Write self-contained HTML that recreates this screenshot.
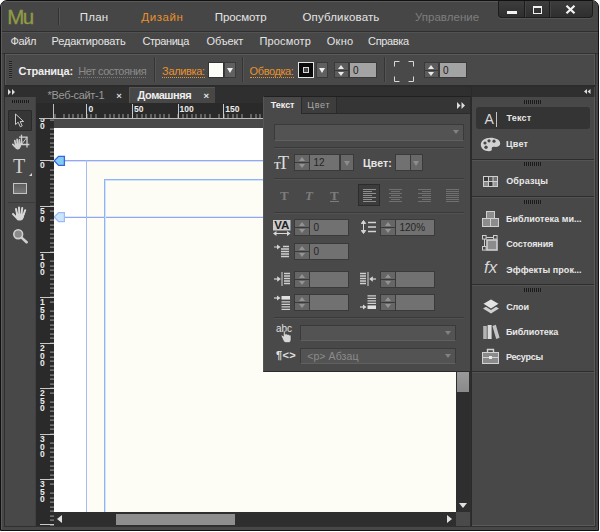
<!DOCTYPE html>
<html lang="ru">
<head>
<meta charset="utf-8">
<title>Adobe Muse</title>
<style>
html,body{margin:0;padding:0;}
body{width:600px;height:532px;background:#fff;overflow:hidden;position:relative;font-family:"Liberation Sans",sans-serif;font-size:11px;color:#e4e4e4;}
.a{position:absolute;}
.t{position:absolute;white-space:nowrap;line-height:1;}
#win{position:absolute;left:0;top:0;width:597px;height:529px;border:1px solid #111;border-radius:7px 7px 0 0;background:#474747;overflow:hidden;}
/* everything inside #win is offset by the 1px border: use #in wrapper shifted -1,-1 so coords = page coords */
#in{position:absolute;left:-1px;top:-1px;width:600px;height:532px;}
.b{font-weight:bold;}
.grip{background:repeating-linear-gradient(to right,#1a1a1a 0,#1a1a1a 1px,#4a4a4a 1px,#4a4a4a 2px);}
.dl{font-size:9px;color:#e8e8e8;}
.hs{width:122px;height:1px;background:#2c2c2c;border-bottom:1px solid #545454;}
.rl{font-size:8.5px;font-weight:bold;color:#ececec;}
.or{color:#e8912d;}
.sep{width:1px;background:#353535;border-right:1px solid #545454;}
.dd{background:#606060;border:1px solid #3a3a3a;box-sizing:border-box;}
.dd i{position:absolute;left:2px;top:5px;width:0;height:0;border-left:3.5px solid transparent;border-right:3.5px solid transparent;border-top:5px solid #f0f0f0;}
.spin{width:14px;height:16px;background:#5c5c5c;border:1px solid #3a3a3a;box-sizing:border-box;}
.spin:after{content:"";position:absolute;left:0;top:7px;width:13px;height:1px;background:#3a3a3a;}
.spin b{position:absolute;left:3px;top:2px;width:0;height:0;border-left:3px solid transparent;border-right:3px solid transparent;border-bottom:4px solid #e8e8e8;}
.spin s{position:absolute;left:3px;top:9px;width:0;height:0;border-left:3px solid transparent;border-right:3px solid transparent;border-top:4px solid #e8e8e8;}
.inp{height:16px;background:#a3a3a3;border:1px solid #3a3a3a;box-sizing:border-box;color:#1a1a1a;font-size:10px;line-height:15px;padding-left:3px;}
.dis{background:#717171;}
.spin.dis{background:#666;}
.spin.dis b{border-bottom-color:#939393;}
.spin.dis s{border-top-color:#939393;}
.spin.dis{height:17px;width:16px;}
.spin.dis b,.spin.dis s{left:4px;}
.spin.dis:after{width:14px;}
.inp.dis{height:17px;line-height:15px;color:#262626;padding-left:3.5px;}
.dd.dis i{border-top-color:#8c8c8c;}
.dd.dis{background:#686868;}
.ddl{background:#535353;border:1px solid #3a3a3a;border-bottom-color:#606060;box-sizing:border-box;}
.ddl i{position:absolute;right:4px;top:5px;width:0;height:0;border-left:3.5px solid transparent;border-right:3.5px solid transparent;border-top:4.5px solid #828282;}
</style>
</head>
<body>
<div id="win"><div id="in">

<!-- ===== top application bar ===== -->
<div class="a" id="topbar" style="left:1px;top:1px;width:597px;height:30px;background:#464646;"></div>
<div class="a" style="left:4px;top:1px;width:591px;height:1px;background:#5a5a5a;"></div>
<div class="a" style="left:1px;top:31px;width:597px;height:1px;background:#2f2f2f;"></div>
<div class="a" style="left:1px;top:32px;width:597px;height:1px;background:#525252;"></div>
<div class="t" style="left:7.3px;top:7px;font-size:20.5px;-webkit-text-stroke:0.35px;color:#8f9b45;letter-spacing:-1.67px;">Mu</div>
<div class="a" style="left:58px;top:8px;width:1px;height:17px;background:#333;"></div>
<div class="a" style="left:59px;top:8px;width:1px;height:17px;background:#555;"></div>
<div class="t" style="left:79.7px;top:12px;font-size:11.5px;letter-spacing:0.25px;">План</div>
<div class="t or" style="left:141.3px;top:12px;font-size:11.5px;letter-spacing:0.59px;">Дизайн</div>
<div class="t" style="left:214.7px;top:12px;font-size:11.5px;letter-spacing:-0.07px;">Просмотр</div>
<div class="t" style="left:302.5px;top:12px;font-size:11.5px;letter-spacing:0.15px;">Опубликовать</div>
<div class="t" style="left:414.9px;top:12px;font-size:11.5px;color:#7e7e7e;letter-spacing:0.04px;">Управление</div>

<!-- window buttons -->
<div class="a" style="left:498px;top:0px;width:95px;height:18px;box-sizing:border-box;background:linear-gradient(#3d3d3d,#2f2f2f);border:1px solid #1c1c1c;border-top:none;border-radius:0 0 4px 4px;box-shadow:0 1px 0 #555;"></div>
<div class="a" style="left:524px;top:1px;width:1px;height:16px;background:#1c1c1c;box-shadow:1px 0 0 #444;"></div>
<div class="a" style="left:549px;top:1px;width:1px;height:16px;background:#1c1c1c;box-shadow:1px 0 0 #444;"></div>
<div class="a" style="left:507px;top:11px;width:10px;height:3px;background:#f2f2f2;"></div>
<div class="a" style="left:533px;top:6px;width:9px;height:8px;box-sizing:border-box;border:1.5px solid #f2f2f2;border-top-width:2px;"></div>
<svg class="a" style="left:565px;top:5px;" width="11" height="9" viewBox="0 0 11 9"><path d="M1.5 0.8L9.5 8.2M9.5 0.8L1.5 8.2" stroke="#f4f4f4" stroke-width="2.2"/></svg>

<!-- ===== menu bar ===== -->
<div class="a" id="menubar" style="left:1px;top:33px;width:597px;height:20px;background:#474747;"></div>
<div class="t" style="left:10.4px;top:36px;letter-spacing:-0.31px;">Файл</div>
<div class="t" style="left:51.5px;top:36px;letter-spacing:-0.15px;">Редактировать</div>
<div class="t" style="left:142.4px;top:36px;letter-spacing:-0.41px;">Страница</div>
<div class="t" style="left:206.5px;top:36px;letter-spacing:-0.15px;">Объект</div>
<div class="t" style="left:259.4px;top:36px;letter-spacing:0.18px;">Просмотр</div>
<div class="t" style="left:326.7px;top:36px;letter-spacing:0.32px;">Окно</div>
<div class="t" style="left:368.1px;top:36px;letter-spacing:-0.35px;">Справка</div>

<!-- ===== control bar ===== -->
<div class="a" id="ctrl" style="left:5px;top:54px;width:590px;height:32px;background:#494949;"></div>
<div class="a" style="left:1px;top:53px;width:597px;height:1px;background:#333;"></div>
<div class="a" style="left:5px;top:54px;width:590px;height:1px;background:#5a5a5a;"></div>
<div class="a" style="left:5px;top:54px;width:1px;height:31px;background:#585858;"></div>
<div class="a" style="left:594px;top:54px;width:1px;height:31px;background:#585858;"></div>
<div class="a" style="left:5px;top:85px;width:590px;height:2px;background:#2b2b2b;"></div>
<!-- window frame inner lines -->
<div class="a" style="left:4px;top:53px;width:1px;height:474px;background:#303030;"></div>
<div class="a" style="left:595px;top:53px;width:1px;height:474px;background:#303030;"></div>
<div class="a" style="left:4px;top:526px;width:592px;height:1px;background:#303030;"></div>
<div class="a" style="left:1px;top:1px;width:1px;height:528px;background:#5c5c5c;"></div>
<div class="a" style="left:9px;top:61px;width:3px;height:18px;background:repeating-linear-gradient(to bottom,#222 0,#222 1px,#555 1px,#555 2px);"></div>
<div class="t b" style="left:18.6px;top:66px;color:#eee;letter-spacing:-0.22px;">Страница:</div>
<div class="t" style="left:78.2px;top:66px;color:#8b8b8b;border-bottom:1px dotted #777;padding-bottom:0px;letter-spacing:-0.48px;">Нет состояния</div>
<div class="a sep" style="left:154px;top:57px;height:25px;"></div>
<div class="t or" style="left:162.1px;top:66px;border-bottom:1px dotted #e8912d;padding-bottom:0px;letter-spacing:-0.36px;">Заливка:</div>
<div class="a" style="left:208px;top:62px;width:16px;height:16px;background:#fdfdf8;border:1px solid #333;box-sizing:border-box;"></div>
<div class="a dd" style="left:224px;top:62px;width:12px;height:16px;"><i></i></div>
<div class="a sep" style="left:242px;top:57px;height:25px;"></div>
<div class="t or" style="left:249.6px;top:66px;border-bottom:1px dotted #e8912d;padding-bottom:0px;letter-spacing:-0.40px;">Обводка:</div>
<div class="a" style="left:298px;top:62px;width:16px;height:16px;background:#0a0a0a;border:1px solid #e4e4e4;box-sizing:border-box;"><div class="a" style="left:4px;top:4px;width:6px;height:6px;box-sizing:border-box;border:1.5px solid #d8d8d8;background:#444;"></div></div>
<div class="a dd" style="left:316px;top:62px;width:12px;height:16px;"><i></i></div>
<div class="a spin" style="left:334px;top:62px;width:15px;"><b></b><s></s></div>
<div class="a inp" style="left:349px;top:62px;width:28px;">0</div>
<div class="a sep" style="left:384px;top:57px;height:25px;"></div>
<svg class="a" style="left:393px;top:60px;" width="22" height="23" viewBox="0 0 22 23"><path d="M1.5 6.5V1.5H6.5M15.5 1.5H20.5V6.5M20.5 16.5V21.5H15.5M6.5 21.5H1.5V16.5" fill="none" stroke="#d8d8d8" stroke-width="1"/></svg>
<div class="a spin" style="left:424px;top:62px;width:15px;"><b></b><s></s></div>
<div class="a inp" style="left:439px;top:62px;width:28px;">0</div>

<!-- ===== document area ===== -->
<div class="a" id="doc" style="left:36px;top:87px;width:435px;height:439px;background:#2f2f2f;"></div>
<!-- tabs -->
<div class="t" style="left:47.5px;top:90px;font-size:11px;color:#9a9a9a;letter-spacing:-0.31px;">*Веб-сайт-1</div>
<div class="t b" style="left:116.2px;top:91px;font-size:9.5px;color:#d8d8d8;">×</div>
<div class="a" style="left:129px;top:87px;width:86px;height:16px;background:#474747;border-left:1px solid #555;border-top:1px solid #555;box-sizing:border-box;"></div>
<div class="t b" style="left:137.6px;top:90px;font-size:11px;color:#eee;letter-spacing:-0.47px;">Домашняя</div>
<div class="t b" style="left:203.4px;top:91px;font-size:9.5px;color:#e6e6e6;">×</div>
<!-- pasteboard + canvas -->
<div class="a" style="left:54px;top:119px;width:416px;height:393px;background:#484848;"></div>
<div class="a" id="canvas" style="left:54px;top:128px;width:402px;height:384px;background:#fff;"></div>
<div class="a" style="left:87px;top:161px;width:369px;height:351px;background:#fdfdf5;"></div>
<!-- guides -->
<div class="a" style="left:54px;top:160px;width:417px;height:1px;background:#93a8f2;"></div>
<div class="a" style="left:54px;top:161px;width:417px;height:1px;background:rgba(147,168,242,0.35);"></div>
<div class="a" style="left:54px;top:217px;width:417px;height:1px;background:#8ea6f3;"></div>
<div class="a" style="left:54px;top:216px;width:417px;height:1px;background:rgba(142,166,243,0.25);"></div>
<div class="a" style="left:86px;top:160px;width:1px;height:352px;background:#a4bbf4;"></div>
<div class="a" style="left:104px;top:179px;width:367px;height:333px;border-left:1px solid #8fb4f3;border-top:1px solid #8fb4f3;box-sizing:border-box;"></div>
<div class="a" style="left:105px;top:180px;width:366px;height:332px;border-left:1px solid #cfe3fa;border-top:1px solid #cfe3fa;box-sizing:border-box;"></div>
<svg class="a" style="left:53px;top:154px;" width="14" height="14" viewBox="0 0 14 14"><path d="M1.2 6.8L5.6 2.4H11.4V11.4H5.6Z" fill="#84cdf2" stroke="#3966e0" stroke-width="1.3"/></svg>
<svg class="a" style="left:53px;top:210px;" width="14" height="14" viewBox="0 0 14 14"><path d="M1.2 7L5.6 2.6H11.4V11.6H5.6Z" fill="#cbe6fa" stroke="#9dbaf4" stroke-width="1.2"/></svg>
<!-- horizontal ruler -->
<div class="a" style="left:36px;top:103px;width:435px;height:16px;background:#2a2a2a;"></div>
<div class="a" style="left:54px;top:114px;width:417px;height:4px;background:repeating-linear-gradient(to right,rgba(205,205,205,0.7) 0,rgba(205,205,205,0.7) 0.9px,transparent 0.9px,transparent 4.56px);background-position:0.5px 0;"></div>
<div class="a" style="left:39px;top:118px;width:432px;height:1px;background:#bdbdbd;"></div>
<div class="a" style="left:86.4px;top:104px;width:1px;height:14px;background:#c8c8c8;"></div><div class="t rl" style="left:88.4px;top:105px;">0</div>
<div class="a" style="left:132.0px;top:104px;width:1px;height:14px;background:#c8c8c8;"></div><div class="t rl" style="left:134.0px;top:105px;">50</div>
<div class="a" style="left:177.6px;top:104px;width:1px;height:14px;background:#c8c8c8;"></div><div class="t rl" style="left:179.6px;top:105px;">100</div>
<div class="a" style="left:223.2px;top:104px;width:1px;height:14px;background:#c8c8c8;"></div><div class="t rl" style="left:225.2px;top:105px;">150</div>
<div class="a" style="left:268.8px;top:104px;width:1px;height:14px;background:#c8c8c8;"></div><div class="t rl" style="left:270.8px;top:105px;">200</div>
<!-- vertical ruler -->
<div class="a" style="left:36px;top:119px;width:18px;height:407px;background:#2a2a2a;"></div>
<div class="a" style="left:50px;top:119px;width:4px;height:407px;background:repeating-linear-gradient(to bottom,rgba(205,205,205,0.7) 0,rgba(205,205,205,0.7) 0.9px,transparent 0.9px,transparent 4.55px);background-position:0 0.6px;"></div>
<div class="a" style="left:53px;top:104px;width:1px;height:15px;background:#bdbdbd;"></div>
<div class="a" style="left:40px;top:160px;width:14px;height:1px;background:#c8c8c8;"></div><div class="t rl" style="left:40px;top:161px;">0</div>
<div class="a" style="left:40px;top:206px;width:14px;height:1px;background:#c8c8c8;"></div><div class="t rl" style="left:40px;top:207px;">5</div><div class="t rl" style="left:40px;top:215px;">0</div>
<div class="a" style="left:40px;top:252px;width:14px;height:1px;background:#c8c8c8;"></div><div class="t rl" style="left:40px;top:253px;">1</div><div class="t rl" style="left:40px;top:261px;">0</div><div class="t rl" style="left:40px;top:268px;">0</div>
<div class="a" style="left:40px;top:297px;width:14px;height:1px;background:#c8c8c8;"></div><div class="t rl" style="left:40px;top:298px;">1</div><div class="t rl" style="left:40px;top:306px;">5</div><div class="t rl" style="left:40px;top:313px;">0</div>
<div class="a" style="left:40px;top:343px;width:14px;height:1px;background:#c8c8c8;"></div><div class="t rl" style="left:40px;top:344px;">2</div><div class="t rl" style="left:40px;top:352px;">0</div><div class="t rl" style="left:40px;top:359px;">0</div>
<div class="a" style="left:40px;top:388px;width:14px;height:1px;background:#c8c8c8;"></div><div class="t rl" style="left:40px;top:389px;">2</div><div class="t rl" style="left:40px;top:397px;">5</div><div class="t rl" style="left:40px;top:404px;">0</div>
<div class="a" style="left:40px;top:434px;width:14px;height:1px;background:#c8c8c8;"></div><div class="t rl" style="left:40px;top:435px;">3</div><div class="t rl" style="left:40px;top:443px;">0</div><div class="t rl" style="left:40px;top:450px;">0</div>
<div class="a" style="left:40px;top:479px;width:14px;height:1px;background:#c8c8c8;"></div><div class="t rl" style="left:40px;top:480px;">3</div><div class="t rl" style="left:40px;top:488px;">5</div><div class="t rl" style="left:40px;top:495px;">0</div>
<div class="a" style="left:40px;top:524px;width:14px;height:1px;background:#c8c8c8;"></div>
<div class="t rl" style="left:40px;top:119px;height:4px;overflow:hidden;"><span style="position:relative;top:-4px;">5</span></div><div class="t rl" style="left:40px;top:122px;">0</div>

<!-- scrollbars -->
<div class="a" style="left:456px;top:128px;width:14px;height:384px;background:#2e2e2e;"></div>
<div class="a" style="left:457px;top:372px;width:12px;height:20px;background:linear-gradient(#9a9a9a,#8a8a8a);"></div>
<div class="a" style="left:459px;top:503px;width:0;height:0;border-left:4px solid transparent;border-right:4px solid transparent;border-top:5px solid #e0e0e0;"></div>
<div class="a" style="left:54px;top:512px;width:416px;height:14px;background:#2e2e2e;"></div>
<div class="a" style="left:456px;top:512px;width:14px;height:14px;background:#4a4a4a;"></div>
<div class="a" style="left:116px;top:514px;width:119px;height:11px;background:#8e8e8e;"></div>
<div class="a" style="left:57px;top:515px;width:0;height:0;border-top:4px solid transparent;border-bottom:4px solid transparent;border-right:5px solid #e0e0e0;"></div>
<div class="a" style="left:447px;top:515px;width:0;height:0;border-top:4px solid transparent;border-bottom:4px solid transparent;border-left:5px solid #e0e0e0;"></div>

<!-- ===== left tools ===== -->
<div class="a" id="tools" style="left:5px;top:87px;width:31px;height:439px;background:#484848;"></div>
<div class="a" style="left:5px;top:87px;width:31px;height:10px;background:#2f2f2f;"></div>
<div class="a" style="left:35px;top:97px;width:1px;height:429px;background:#414141;"></div>
<svg class="a" style="left:8px;top:89px;" width="8" height="6" viewBox="0 0 8 6"><path d="M0 0L3 3L0 6ZM4 0L7 3L4 6Z" fill="#dcdcdc"/></svg>
<div class="a grip" style="left:12px;top:100px;width:18px;height:3px;"></div>
<div class="a" style="left:8px;top:110px;width:24px;height:21px;background:#363636;border:1px solid #2a2a2a;box-sizing:border-box;border-radius:1px;"></div>
<!-- selection arrow -->
<svg class="a" style="left:13px;top:112px;" width="14" height="17" viewBox="0 0 14 17"><path d="M2.5 2V12.6L5.2 10.2L7.3 14.8L9.2 13.9L7.2 9.5H10.6Z" fill="#303030" stroke="#dadada" stroke-width="0.9" stroke-linejoin="miter"/></svg>
<!-- crop tool -->
<svg class="a" style="left:11px;top:134px;" width="20" height="18" viewBox="0 0 20 18"><path d="M10.5 0.8V10.5H18.4M8 3.2H16V13.4" fill="none" stroke="#d0d0d0" stroke-width="1.3"/><path d="M16 3.2L10.5 10.5" stroke="#d0d0d0" stroke-width="0.9"/><g stroke="#cfcfcf" stroke-width="1.7" stroke-linecap="round" fill="none"><path d="M4.6 10.4L3.8 6.6"/><path d="M6.3 9.6L6.1 5.4"/><path d="M8 9.6L8.4 5.8"/><path d="M9.6 10.4L10.6 7.4"/><path d="M4 12.8L1.8 10.4"/></g><path d="M3.8 9.6H10.4L9.8 12.8Q9 15.4 7.2 15.4H6.4Q4.4 15.4 3.6 12.8Z" fill="#cfcfcf"/></svg>
<!-- text tool -->
<div class="t" style="left:13px;top:156px;font-family:'Liberation Serif',serif;font-size:20px;color:#cfcfcf;">T</div>
<div class="a" style="left:29px;top:173px;width:0;height:0;border-left:3px solid transparent;border-bottom:3px solid #d8d8d8;"></div>
<!-- rectangle tool -->
<div class="a" style="left:13px;top:183px;width:14px;height:11px;box-sizing:border-box;border:1px solid #c4c4c4;background:linear-gradient(#5e5e5e,#787878);"></div>
<div class="a" style="left:8px;top:202px;width:27px;height:1px;background:#3a3a3a;"></div>
<!-- hand tool -->
<svg class="a" style="left:11px;top:205px;" width="18" height="17" viewBox="0 0 18 17"><g stroke="#d6d6d6" stroke-width="2" stroke-linecap="round" fill="none"><path d="M6.2 9.5L5 4"/><path d="M8.3 8.5L8 2.6"/><path d="M10.6 8.5L11.2 3"/><path d="M12.6 9.5L14.2 5.2"/><path d="M5.4 12.6L2 9"/></g><path d="M5 8.5H13.6L12.8 12.6Q11.8 15.6 9.4 15.6H8.4Q5.8 15.6 4.8 12.4Z" fill="#d6d6d6"/></svg>
<!-- zoom tool -->
<svg class="a" style="left:12px;top:228px;" width="17" height="16" viewBox="0 0 17 16"><circle cx="6.2" cy="6.2" r="4.4" fill="#8a8a8a" stroke="#d0d0d0" stroke-width="1.6"/><path d="M9.6 9.6L14.6 14.2" stroke="#d0d0d0" stroke-width="2.6" stroke-linecap="round"/></svg>

<!-- ===== right dock ===== -->
<div class="a" id="dock" style="left:472px;top:87px;width:122px;height:439px;background:#484848;"></div>
<div class="a" style="left:471px;top:87px;width:1px;height:439px;background:#2a2a2a;"></div>
<div class="a" style="left:594px;top:97px;width:1px;height:429px;background:#5a5a5a;"></div>
<div class="a" style="left:472px;top:525px;width:123px;height:1px;background:#5a5a5a;"></div>

<div class="a" style="left:472px;top:87px;width:122px;height:10px;background:#2f2f2f;"></div>
<svg class="a" style="left:584px;top:89px;" width="7" height="5" viewBox="0 0 7 5"><path d="M3 0L0 2.5L3 5ZM6.5 0L3.5 2.5L6.5 5Z" fill="#dcdcdc"/></svg>
<div class="a grip" style="left:524px;top:100px;width:18px;height:4px;"></div>
<div class="a" style="left:476px;top:107px;width:114px;height:22px;background:#343434;border-radius:3px;"></div>
<!-- icon: text -->
<div class="t" style="left:484.5px;top:112px;font-size:14px;color:#d9d9d9;">A</div>
<div class="a" style="left:496px;top:112px;width:1px;height:15px;background:#c4c4c4;"></div>
<div class="t b dl" style="left:506.5px;top:114px;letter-spacing:0.17px;">Текст</div>
<!-- icon: palette -->
<svg class="a" style="left:480px;top:137px;" width="21" height="15" viewBox="0 0 21 15"><path d="M10.5 0.8C4.8 0.8 0.8 4 0.8 7.8C0.8 11.6 4.6 14.2 9 14.2C11.2 14.2 12.2 13.2 11.8 11.8C11.4 10.4 12.6 9.6 14.4 9.8C17.6 10.2 20.2 9 20.2 6.4C20.2 3 15.8 0.8 10.5 0.8Z" fill="#d2d2d2"/><circle cx="5" cy="6" r="1.6" fill="#484848"/><circle cx="9" cy="3.8" r="1.6" fill="#484848"/><circle cx="14" cy="4.2" r="1.6" fill="#484848"/><circle cx="6" cy="10.2" r="1.7" fill="#484848"/></svg>
<div class="t b dl" style="left:505.9px;top:140px;letter-spacing:0.26px;">Цвет</div>
<div class="a hs" style="left:472px;top:159px;"></div>
<div class="a grip" style="left:524px;top:162px;width:18px;height:4px;"></div>
<!-- icon: swatches -->
<svg class="a" style="left:483px;top:176px;" width="15" height="11" viewBox="0 0 15 11"><rect x="0" y="0" width="15" height="11" fill="#cfcfcf"/><rect x="1" y="1" width="4" height="4" fill="#3a3a3a"/><rect x="6" y="1" width="3.5" height="4" fill="#555"/><rect x="10.5" y="1" width="3.5" height="4" fill="#707070"/><rect x="1" y="6" width="4" height="4" fill="#8a8a8a"/><rect x="6" y="6" width="3.5" height="4" fill="#3a3a3a"/><rect x="10.5" y="6" width="3.5" height="4" fill="#9a9a9a"/></svg>
<div class="t b dl" style="left:506.2px;top:177px;letter-spacing:0.15px;">Образцы</div>
<div class="a hs" style="left:472px;top:196px;"></div>
<div class="a grip" style="left:524px;top:200px;width:18px;height:4px;"></div>
<!-- icon: widget library -->
<svg class="a" style="left:482px;top:211px;" width="17" height="16" viewBox="0 0 17 16"><rect x="4.5" y="0.5" width="8" height="7" fill="#8c8c8c" stroke="#cfcfcf"/><rect x="0.5" y="7.5" width="8" height="8" fill="#8c8c8c" stroke="#cfcfcf"/><rect x="8.5" y="7.5" width="8" height="8" fill="#8c8c8c" stroke="#cfcfcf"/></svg>
<div class="t b dl" style="left:505.9px;top:215px;letter-spacing:0.05px;">Библиотека ми...</div>
<!-- icon: states -->
<svg class="a" style="left:482px;top:235px;" width="17" height="17" viewBox="0 0 17 17"><rect x="5" y="5" width="10" height="10" fill="#8c8c8c" stroke="#cfcfcf" stroke-width="1.6"/><path d="M2.5 13V2.5H13" fill="none" stroke="#cfcfcf" stroke-width="1"/><rect x="0.5" y="0.5" width="3.6" height="3.6" fill="#484848" stroke="#cfcfcf"/><rect x="11.5" y="0.5" width="3.6" height="3.6" fill="#484848" stroke="#cfcfcf"/><rect x="0.5" y="11.5" width="3.6" height="3.6" fill="#484848" stroke="#cfcfcf"/></svg>
<div class="t b dl" style="left:506.2px;top:240px;letter-spacing:-0.11px;">Состояния</div>
<!-- icon: fx -->
<div class="t" style="left:484px;top:259px;font-style:italic;font-size:17px;color:#d6d6d6;letter-spacing:0px;">fx</div>
<div class="t b dl" style="left:506.3px;top:266px;letter-spacing:0.05px;">Эффекты прок...</div>
<div class="a hs" style="left:472px;top:284px;"></div>
<div class="a grip" style="left:524px;top:288px;width:18px;height:4px;"></div>
<!-- icon: layers -->
<svg class="a" style="left:482px;top:298px;" width="18" height="17" viewBox="0 0 18 17"><path d="M9 5.8L17 10.6L9 15.6L1 10.6Z" fill="#d0d0d0"/><path d="M9 0.6L17.6 5.8L9 11.2L0.4 5.8Z" fill="#e4e4e4" stroke="#484848" stroke-width="1.3"/></svg>
<div class="t b dl" style="left:506.2px;top:303px;letter-spacing:-0.09px;">Слои</div>
<!-- icon: library -->
<svg class="a" style="left:482px;top:324px;" width="18" height="16" viewBox="0 0 18 16"><rect x="1.2" y="2" width="3.6" height="13" fill="#b4b4b4"/><rect x="5.6" y="1" width="4" height="14" fill="#dcdcdc"/><path d="M10.4 2L13.8 0.8L17.6 13.8L14.2 15Z" fill="#c4c4c4"/></svg>
<div class="t b dl" style="left:505.9px;top:328px;letter-spacing:-0.05px;">Библиотека</div>
<!-- icon: assets -->
<svg class="a" style="left:482px;top:348px;" width="17" height="16" viewBox="0 0 17 16"><path d="M5.5 4V1.5H11.5V4" fill="none" stroke="#d2d2d2" stroke-width="1.4"/><rect x="0.5" y="4.5" width="16" height="11" fill="#8a8a8a" stroke="#d2d2d2"/><path d="M1 9.5H16" stroke="#d2d2d2"/><rect x="7" y="8" width="3" height="3" fill="#e8e8e8"/></svg>
<div class="t b dl" style="left:505.9px;top:353px;letter-spacing:-0.24px;">Ресурсы</div>
<div class="a hs" style="left:472px;top:371px;"></div>

<!-- ===== floating text panel ===== -->
<div class="a" id="tpanel" style="left:263px;top:96px;width:208px;height:276px;background:#494949;border:1px solid #2b2b2b;border-left-color:#555;border-top-color:#202020;box-sizing:border-box;"></div>
<div class="a" style="left:264px;top:97px;width:206px;height:16px;background:#353535;"></div>
<div class="a" style="left:264px;top:113px;width:206px;height:1px;background:#2a2a2a;"></div>
<div class="a" style="left:264px;top:97px;width:37px;height:17px;background:#494949;"></div>
<div class="a" style="left:301px;top:97px;width:1px;height:16px;background:#2a2a2a;"></div>
<div class="a" style="left:302px;top:97px;width:34px;height:16px;background:#3d3d3d;"></div>
<div class="a" style="left:336px;top:97px;width:1px;height:16px;background:#2a2a2a;"></div>
<div class="t b" style="left:270.8px;top:101px;font-size:9px;color:#f0f0f0;letter-spacing:-0.03px;">Текст</div>
<div class="t" style="left:307.2px;top:101px;font-size:9px;color:#a8a8a8;letter-spacing:0.79px;">Цвет</div>
<svg class="a" style="left:457px;top:102px;" width="8" height="7" viewBox="0 0 8 7"><path d="M0 0L3.5 3.5L0 7ZM4.5 0L8 3.5L4.5 7Z" fill="#dcdcdc"/></svg>
<!-- font dropdown -->
<div class="a ddl" style="left:274px;top:124px;width:190px;height:17px;"><i></i></div>
<div class="a" style="left:274px;top:147px;width:190px;height:1px;background:#3a3a3a;border-bottom:1px solid #525252;"></div>
<!-- row: size / color -->
<svg class="a" style="left:273px;top:155px;" width="18" height="16" viewBox="0 0 18 16"><text x="1" y="14" font-family="Liberation Serif, serif" font-weight="bold" font-size="10" fill="#d8d8d8">T</text><text x="5" y="14" font-family="Liberation Serif, serif" font-size="18" fill="#dedede">T</text></svg>
<div class="a spin dis" style="left:294px;top:154px;"><b></b><s></s></div><div class="a inp dis" style="left:309px;top:154px;width:31px;">12</div><div class="a dd dis" style="left:340px;top:154px;width:14px;height:17px;"><i style="left:3px;top:6px;"></i></div>
<div class="t b" style="left:363.1px;top:158px;font-size:10.5px;color:#e6e6e6;letter-spacing:0.09px;">Цвет:</div>
<div class="a" style="left:395px;top:154px;width:16px;height:17px;background:#717171;border:1px solid #3a3a3a;box-sizing:border-box;"></div>
<div class="a dd dis" style="left:410px;top:154px;width:13px;height:17px;"><i style="left:2px;top:6px;"></i></div>
<div class="a" style="left:274px;top:178px;width:190px;height:1px;background:#3a3a3a;border-bottom:1px solid #525252;"></div>
<!-- row: styles / alignment -->
<div class="t b" style="left:280px;top:189px;font-family:'Liberation Serif',serif;font-size:13px;color:#7c7c7c;">T</div>
<div class="t b" style="left:305px;top:189px;font-family:'Liberation Serif',serif;font-style:italic;font-size:13px;color:#7c7c7c;">T</div>
<div class="t b" style="left:330px;top:189px;font-family:'Liberation Serif',serif;font-size:13px;color:#7c7c7c;border-bottom:1px solid #7c7c7c;height:12px;">T</div>
<div class="a" style="left:358px;top:184px;width:22px;height:22px;background:#3c3c3c;border:1px solid #2c2c2c;box-sizing:border-box;"></div>
<svg class="a" style="left:363px;top:189px;" width="13" height="13" viewBox="0 0 13 13"><rect x="0" y="0" width="13" height="1" fill="#8e8e8e"/><rect x="0" y="2" width="9" height="1" fill="#8e8e8e"/><rect x="0" y="4" width="13" height="1" fill="#8e8e8e"/><rect x="0" y="6" width="9" height="1" fill="#8e8e8e"/><rect x="0" y="8" width="13" height="1" fill="#8e8e8e"/><rect x="0" y="10" width="9" height="1" fill="#8e8e8e"/><rect x="0" y="12" width="13" height="1" fill="#8e8e8e"/></svg><svg class="a" style="left:389px;top:189px;" width="13" height="13" viewBox="0 0 13 13"><rect x="0" y="0" width="13" height="1" fill="#707070"/><rect x="2" y="2" width="9" height="1" fill="#707070"/><rect x="0" y="4" width="13" height="1" fill="#707070"/><rect x="2" y="6" width="9" height="1" fill="#707070"/><rect x="0" y="8" width="13" height="1" fill="#707070"/><rect x="2" y="10" width="9" height="1" fill="#707070"/><rect x="0" y="12" width="13" height="1" fill="#707070"/></svg><svg class="a" style="left:418px;top:189px;" width="13" height="13" viewBox="0 0 13 13"><rect x="0" y="0" width="13" height="1" fill="#707070"/><rect x="4" y="2" width="9" height="1" fill="#707070"/><rect x="0" y="4" width="13" height="1" fill="#707070"/><rect x="4" y="6" width="9" height="1" fill="#707070"/><rect x="0" y="8" width="13" height="1" fill="#707070"/><rect x="4" y="10" width="9" height="1" fill="#707070"/><rect x="0" y="12" width="13" height="1" fill="#707070"/></svg><svg class="a" style="left:446px;top:189px;" width="13" height="13" viewBox="0 0 13 13"><rect x="0" y="0" width="13" height="1" fill="#707070"/><rect x="0" y="2" width="13" height="1" fill="#707070"/><rect x="0" y="4" width="13" height="1" fill="#707070"/><rect x="0" y="6" width="13" height="1" fill="#707070"/><rect x="0" y="8" width="13" height="1" fill="#707070"/><rect x="0" y="10" width="13" height="1" fill="#707070"/><rect x="0" y="12" width="13" height="1" fill="#707070"/></svg>
<div class="a" style="left:274px;top:212px;width:190px;height:1px;background:#3a3a3a;border-bottom:1px solid #525252;"></div>
<!-- row: tracking / leading -->
<svg class="a" style="left:273px;top:220px;" width="18" height="16" viewBox="0 0 18 16"><rect x="0" y="0" width="17.5" height="10.5" fill="#cdcdcd"/><text x="1.2" y="9.3" font-family="Liberation Sans, sans-serif" font-weight="bold" font-size="10.5" fill="#222" textLength="15.2" lengthAdjust="spacingAndGlyphs">VA</text><path d="M2 13.5H15.5" stroke="#d8d8d8" stroke-width="1.2"/><path d="M0 13.5L3.5 11V16ZM17.5 13.5L14 11V16Z" fill="#d8d8d8"/></svg>
<div class="a spin dis" style="left:294px;top:219px;"><b></b><s></s></div><div class="a inp dis" style="left:309px;top:219px;width:40px;">0</div>
<svg class="a" style="left:361px;top:220px;" width="15" height="14" viewBox="0 0 15 14"><path d="M2.5 1V13M2.5 0.5L0.3 3.5H4.7ZM2.5 13.5L0.3 10.5H4.7Z" stroke="#d4d4d4" fill="#d4d4d4" stroke-width="1"/><path d="M7 2.5H15M7 7H15M7 11.5H15" stroke="#d4d4d4" stroke-width="1.4"/></svg>
<div class="a spin dis" style="left:380px;top:219px;"><b></b><s></s></div><div class="a inp dis" style="left:395px;top:219px;width:40px;">120%</div>
<!-- row: indent first -->
<svg class="a" style="left:274px;top:244px;" width="16" height="14" viewBox="0 0 16 14"><path d="M0 3H4" stroke="#d6d6d6" stroke-width="1.2"/><path d="M6.5 3L3 0.4V5.6Z" fill="#d6d6d6"/><path d="M9 2.5H15M7 5H15M7 7.5H15M7 10H15M7 12.5H15" stroke="#cfcfcf" stroke-width="1.3"/></svg>
<div class="a spin dis" style="left:294px;top:243px;"><b></b><s></s></div><div class="a inp dis" style="left:309px;top:243px;width:40px;">0</div>
<!-- row: indents -->
<svg class="a" style="left:274px;top:272px;" width="16" height="14" viewBox="0 0 16 14"><path d="M0 7H4" stroke="#d6d6d6" stroke-width="1.2"/><path d="M6.8 7L3.2 4.2V9.8Z" fill="#d6d6d6"/><path d="M8 0V14" stroke="#d6d6d6" stroke-width="1"/><path d="M10 1.5H16M10 4H16M10 6.5H16M10 9H16M10 11.5H16" stroke="#cfcfcf" stroke-width="1.3"/></svg>
<div class="a spin dis" style="left:294px;top:271px;"><b></b><s></s></div><div class="a inp dis" style="left:309px;top:271px;width:40px;"></div>
<svg class="a" style="left:360px;top:272px;" width="16" height="14" viewBox="0 0 16 14"><path d="M16 7H12" stroke="#d6d6d6" stroke-width="1.2"/><path d="M9.2 7L12.8 4.2V9.8Z" fill="#d6d6d6"/><path d="M8 0V14" stroke="#d6d6d6" stroke-width="1"/><path d="M0 1.5H6M0 4H6M0 6.5H6M0 9H6M0 11.5H6" stroke="#cfcfcf" stroke-width="1.3"/></svg>
<div class="a spin dis" style="left:380px;top:271px;"><b></b><s></s></div><div class="a inp dis" style="left:395px;top:271px;width:40px;"></div>
<!-- row: space before/after -->
<svg class="a" style="left:274px;top:295px;" width="16" height="15" viewBox="0 0 16 15"><path d="M0 3H4" stroke="#d6d6d6" stroke-width="1.2"/><path d="M6.5 3L3 0.4V5.6Z" fill="#d6d6d6"/><rect x="7.5" y="1" width="8.5" height="3.6" fill="#e0e0e0"/><path d="M7.5 6.8H16M7.5 9.3H16M7.5 11.8H16M7.5 14.3H16" stroke="#cfcfcf" stroke-width="1.3"/></svg>
<div class="a spin dis" style="left:294px;top:294px;"><b></b><s></s></div><div class="a inp dis" style="left:309px;top:294px;width:40px;"></div>
<svg class="a" style="left:360px;top:295px;" width="16" height="15" viewBox="0 0 16 15"><path d="M0 12H4" stroke="#d6d6d6" stroke-width="1.2"/><path d="M6.5 12L3 9.4V14.6Z" fill="#d6d6d6"/><path d="M7.5 0.8H16M7.5 3.3H16M7.5 5.8H16M7.5 8.3H16" stroke="#cfcfcf" stroke-width="1.3"/><rect x="7.5" y="10.4" width="8.5" height="3.6" fill="#e0e0e0"/></svg>
<div class="a spin dis" style="left:380px;top:294px;"><b></b><s></s></div><div class="a inp dis" style="left:395px;top:294px;width:40px;"></div>
<div class="a" style="left:274px;top:317px;width:190px;height:1px;background:#3a3a3a;border-bottom:1px solid #525252;"></div>
<!-- row: hyperlink style -->
<div class="t" style="left:276px;top:324px;font-size:10px;color:#e0e0e0;">abc</div>
<svg class="a" style="left:280px;top:330px;" width="14" height="13" viewBox="0 0 14 13"><path d="M1 5.6C1.8 4.8 2.8 5.2 3.4 6.2V1.6C3.4 0.4 5.2 0.4 5.2 1.6V4.2C5.6 3.6 7 3.6 7.2 4.6C7.8 4 9 4.2 9.2 5.2C9.8 4.8 11 5 11 6.2V9.4C11 11.4 10 12.6 8.2 12.6H6.2C4.8 12.6 4 12 3.4 10.8Z" fill="#d8d8d8" stroke="#3a3a3a" stroke-width="0.6"/></svg>
<div class="a ddl" style="left:300px;top:325px;width:156px;height:16px;"><i></i></div>
<!-- row: paragraph tag -->
<div class="t b" style="left:276px;top:350px;font-size:11px;color:#e0e0e0;letter-spacing:0.4px;">¶&lt;&gt;</div>
<div class="a ddl" style="left:300px;top:348px;width:156px;height:16px;"><i></i></div>
<div class="t" style="left:307.2px;top:351px;font-size:10.5px;color:#8c8c8c;letter-spacing:0.10px;">&lt;p&gt; Абзац</div>

</div></div>
</body>
</html>
